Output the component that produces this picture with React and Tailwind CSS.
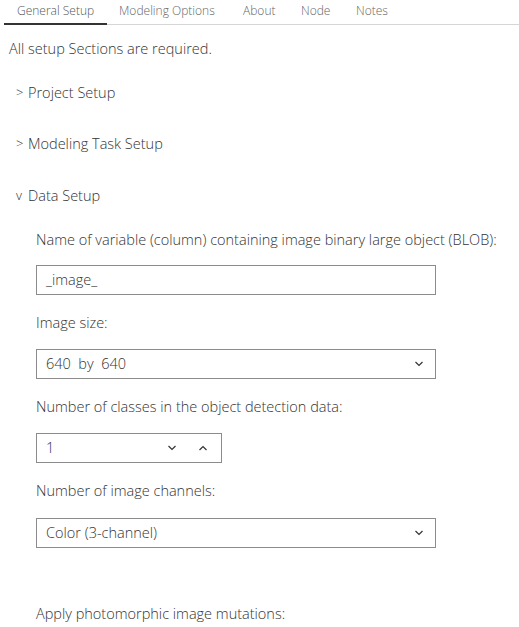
import React, { useState } from 'react';

const Chevron = ({ up = false, className = '' }) => (
  <svg width="10" height="6" viewBox="0 0 10 6" className={className}>
    <path
      d={up ? 'M1.5 5 L5 1.5 L8.5 5' : 'M1.5 1 L5 4.5 L8.5 1'}
      fill="none"
      stroke="#333"
      strokeWidth="1.2"
    />
  </svg>
);

const tabs = [
  { name: 'General Setup', w: 'w-[103px] pl-[13px]' },
  { name: 'Modeling Options', w: 'w-[124px] pl-[12px]' },
  { name: 'About', w: 'w-[58px] pl-[12px]' },
  { name: 'Node', w: 'w-[55px] pl-[12px]' },
  { name: 'Notes', w: 'w-[56px] pl-[12px]' },
];

const Section = ({ label, open, className = '' }) => (
  <div className={`flex items-center h-5 pl-[16px] text-[14.5px] text-[#333] ${className}`}>
    <span className="w-[12px] text-[13px]">{open ? 'v' : '>'}</span>
    <span>{label}</span>
  </div>
);

const Label = ({ children }) => (
  <div className="text-[14.5px] text-[#333] leading-5 whitespace-nowrap">{children}</div>
);

const SelectBox = ({ value }) => (
  <div className="w-[400px] h-[30px] border border-[#8c8c8c] flex items-center justify-between pl-[9px] pr-[11px] text-[14.5px] text-[#333]">
    <span className="whitespace-pre">{value}</span>
    <Chevron />
  </div>
);

const App = () => {
  const [active] = useState(0);

  return (
    <div className="w-[519px] h-[627px] bg-white overflow-hidden font-['Open_Sans',sans-serif] font-light">
      <div className="flex ml-[4px] border-b border-[#d6d6d6] h-[25px]">
        {tabs.map((t, i) => (
          <div
            key={t.name}
            className={`${t.w} whitespace-nowrap shrink-0 pt-[1px] text-[12px] leading-5 -mb-px ${
              i === active ? 'text-[#555] border-b-2 border-[#333]' : 'text-[#666]'
            }`}
          >
            {t.name}
          </div>
        ))}
      </div>

      <div className="pl-[9px] pt-[14px] text-[14.5px] text-[#333] leading-5">
        All setup Sections are required.
      </div>

      <div className="mt-[24px] flex flex-col">
        <Section label="Project Setup" />
        <Section label="Modeling Task Setup" className="mt-[31px]" />
        <Section label="Data Setup" open className="mt-[32px]" />
      </div>

      <div className="pl-[36px] pt-[24px]">
        <Label>Name of variable (column) containing image binary large object (BLOB):</Label>
        <div className="mt-[15px] w-[400px] h-[30px] border border-[#8c8c8c] flex items-center pl-[9px] text-[14.5px] text-[#333]">
          _image_
        </div>

        <div className="mt-[18px]">
          <Label>Image size:</Label>
        </div>
        <div className="mt-[16px]">
          <SelectBox value="640  by  640" />
        </div>

        <div className="mt-[18px]">
          <Label>Number of classes in the object detection data:</Label>
        </div>
        <div className="mt-[16px] w-[186px] h-[30px] border border-[#8c8c8c] flex items-center pl-[9px] text-[14.5px] text-[#3b2a55]">
          <span className="flex-1">1</span>
          <Chevron className="mr-[21px]" />
          <Chevron up className="mr-[13px]" />
        </div>

        <div className="mt-[18px]">
          <Label>Number of image channels:</Label>
        </div>
        <div className="mt-[17px]">
          <SelectBox value="Color (3-channel)" />
        </div>

        <div className="mt-[56px]">
          <Label>Apply photomorphic image mutations:</Label>
        </div>
      </div>
    </div>
  );
};

export default App;
